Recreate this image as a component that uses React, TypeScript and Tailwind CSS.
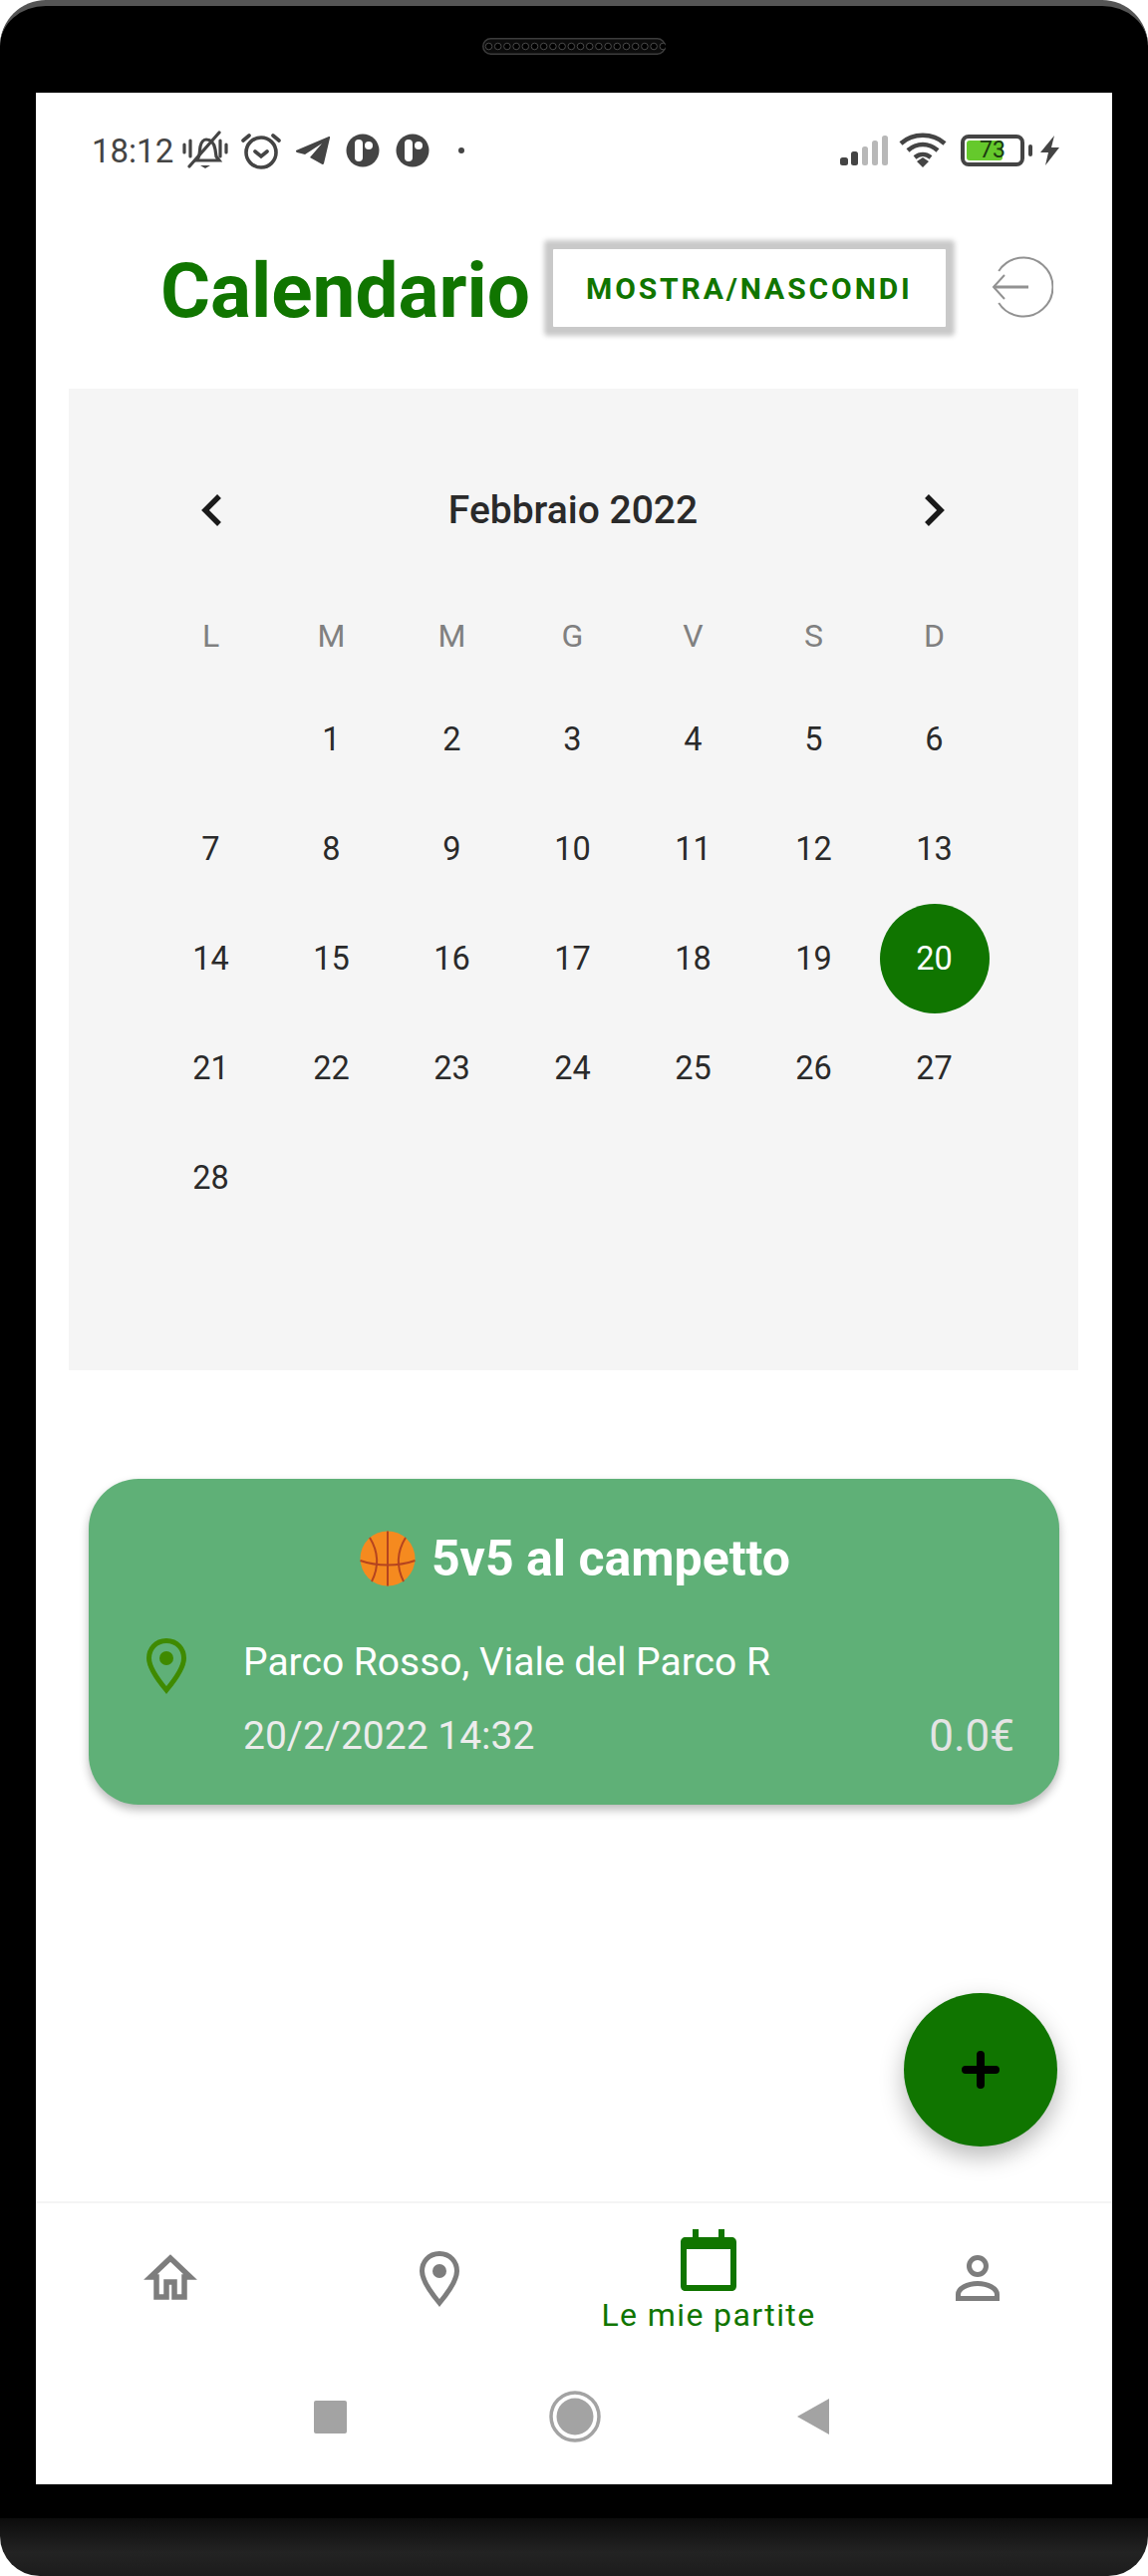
import React from "react";

function Dot() {
  return <svg width="8" height="8" viewBox="0 0 8 8"><circle cx="4" cy="4" r="3" fill="#444" /></svg>;
}

function PillIcon() {
  return (
    <svg width="34" height="34" viewBox="0 0 34 34">
      <circle cx="17" cy="17" r="16.5" fill="#444" />
      <rect x="9" y="6" width="8" height="22" rx="4" fill="#fff" />
      <circle cx="23" cy="12" r="4" fill="#fff" />
    </svg>
  );
}

function StatusBar() {
  return (
    <div className="flex h-[114px] items-center justify-between pl-[56px] pr-[52px] pt-[2px]">
      <div className="flex items-center">
        <span className="text-[33px] leading-none text-[#444]">18:12</span>
        <svg width="46" height="40" viewBox="0 0 46 40" className="ml-[9px]">
          <g fill="none" stroke="#444" strokeWidth="3.2" strokeLinecap="round">
            <path d="M2 14v8M8 10v16M38 10v16M44 14v8" />
            <path d="M14 30c4-3 3-8 4-14 1-5 4-7 6-7 6 0 8 4 9 10l1 7 3 4z" />
            <path d="M7 36L37 2" />
          </g>
          <path d="M18 35h10l-5 3z" fill="#444" />
        </svg>
        <svg width="42" height="38" viewBox="0 0 42 38" className="ml-[12px]">
          <g fill="none" stroke="#444" strokeWidth="3.6" strokeLinecap="round">
            <circle cx="21" cy="21" r="15" />
            <path d="M15 20l6 5 6-5" />
            <path d="M3 9l6-5M39 9l-6-5" />
          </g>
        </svg>
        <svg width="34" height="30" viewBox="0 0 34 30" className="ml-[14px]">
          <path d="M0 15L33 1c1-.3 1.400.4 1 1.400L28 28c-.3 1-1 1.300-2 .8L14 22 26 8 9 19l-8-2c-1-.4-1.300-1.500-1-2z" fill="#444" />
        </svg>
        <div className="ml-[16px] flex"><PillIcon /></div>
        <div className="ml-[16px] flex"><PillIcon /></div>
        <div className="ml-[28px] flex"><Dot /></div>
      </div>
      <div className="flex items-center">
        <svg width="48" height="32" viewBox="0 0 48 32">
          <rect x="0" y="23" width="8" height="8" rx="2.500" fill="#444" />
          <rect x="11" y="17" width="7" height="14" rx="2.500" fill="#444" />
          <rect x="22" y="12" width="6" height="19" rx="2.500" fill="#b8b8b8" />
          <rect x="32" y="6" width="6" height="25" rx="2.500" fill="#b8b8b8" />
          <rect x="42" y="1" width="6" height="30" rx="2.500" fill="#b8b8b8" />
        </svg>
        <svg width="48" height="36" viewBox="0 0 48 36" className="ml-[11px]">
          <g fill="none" stroke="#444" strokeWidth="4.500">
            <path d="M2 11C14 0 34 0 46 11" />
            <path d="M9 18C18 10 30 10 39 18" />
            <path d="M16 25C21 21 27 21 32 25" />
          </g>
          <path d="M18 29l6-4 6 4-6 6z" fill="#444" />
        </svg>
        <div className="relative ml-[14px] flex h-[32px] w-[64px] items-center rounded-[8px] border-[4px] border-[#444] p-[2px]">
          <div className="h-full w-[36px] rounded-[3px] bg-[#65c92c]" />
          <span className="absolute left-[15px] top-[-2px] text-[23px] leading-[28px] text-[#1c3a10]">73</span>
        </div>
        <div className="ml-[4px] h-[12px] w-[4px] rounded-full bg-[#444]" />
        <svg width="20" height="30" viewBox="0 0 20 30" className="ml-[8px]">
          <path d="M14 0L0 17h8L5 30 19 12h-8z" fill="#444" />
        </svg>
      </div>
    </div>
  );
}

function Header() {
  return (
    <div className="mt-[37px] flex h-[116px] items-start pl-[125px]">
      <h1 className="mt-[6px] text-[76.5px] font-bold leading-[84px] text-[#107500]">Calendario</h1>
      <button className="ml-[23px] mt-[6px] flex h-[78px] w-[394px] shrink-0 items-center justify-center rounded-[1px] bg-white text-[30px] font-bold tracking-[2.9px] text-[#107500] shadow-[0_0_5px_9px_#c9c9c9]">
        MOSTRA/NASCONDI
      </button>
      <svg width="64" height="64" viewBox="0 0 64 64" className="ml-[44px] mt-[12px] shrink-0" fill="none" stroke="#929292">
        <path d="M9.200 16A29.500 29.500 0 1 1 9.200 48" strokeWidth="2" />
        <path d="M4 32h35" strokeWidth="3" />
        <path d="M15 20L4 32l11 12" strokeWidth="2" />
      </svg>
    </div>
  );
}

const days: (number | null)[] = [null, ...Array.from({ length: 28 }, (_, i) => i + 1)];

function Chevron({ dir }: { dir: "left" | "right" }) {
  return (
    <svg width="24" height="34" viewBox="0 0 24 34" fill="none" stroke="#1a1a1a" strokeWidth="5.500">
      <path d={dir === "left" ? "M19 3L5 17l14 14" : "M5 3l14 14L5 31"} />
    </svg>
  );
}

function Calendar() {
  return (
    <section className="ml-[33px] mr-[34px] mt-[30px] h-[985px] bg-[#f5f5f5] pl-[82px] pr-[84px] pt-[92px]">
      <div className="flex h-[60px] items-center justify-between pl-[50px] pr-[49px]">
        <Chevron dir="left" />
        <span className="text-[39px] font-medium leading-none text-[#2a2a2a]">Febbraio 2022</span>
        <Chevron dir="right" />
      </div>
      <div className="mt-[76px] grid grid-cols-7 text-center text-[32px] text-[#808080]">
        {["L", "M", "M", "G", "V", "S", "D"].map((d, i) => (
          <div key={i} className="h-[40px] leading-[40px]">{d}</div>
        ))}
      </div>
      <div className="mt-[29px] grid grid-cols-7 auto-rows-[110px] text-center text-[32.500px] text-[#2a2a2a]">
        {days.map((d, i) => (
          <div key={i} className="flex items-center justify-center">
            {d === 20 ? (
              <span className="flex h-[110px] w-[110px] items-center justify-center rounded-full bg-[#107500] text-white">{d}</span>
            ) : (
              d
            )}
          </div>
        ))}
      </div>
    </section>
  );
}

function Basketball() {
  return (
    <svg width="56" height="56" viewBox="0 0 56 56">
      <circle cx="28" cy="28" r="27.500" fill="#f58a1f" />
      <g fill="none" stroke="#b5441f" strokeWidth="2">
        <path d="M28 .5v55M.5 30c17 6 38 6 55 0" />
        <path d="M10 7c8 13 10 28 2 44M46 7c-8 13-10 28-2 44" />
      </g>
    </svg>
  );
}

function EventCard() {
  return (
    <article className="mx-[53px] mt-[109px] h-[327px] rounded-[50px] bg-[#5fb077] pt-[52px] shadow-[0_5px_10px_rgba(0,0,0,0.28)]">
      <div className="flex items-center justify-center pl-[2px]">
        <Basketball />
        <h2 className="ml-[16px] text-[50px] font-bold leading-[56px] text-white">5v5 al campetto</h2>
      </div>
      <div className="mt-[48px] flex items-start pl-[58px] pr-[45px]">
        <svg width="40" height="56" viewBox="0 0 40 56" className="mt-[4px] shrink-0">
          <path d="M20 2.500C9 2.500 2.500 11 2.500 20c0 9 10 23 17.500 32C27.500 43 37.500 29 37.500 20 37.500 11 31 2.500 20 2.500z" fill="none" stroke="#3f8a00" strokeWidth="5" />
          <circle cx="20" cy="20" r="7" fill="#3f8a00" />
        </svg>
        <div className="ml-[57px] flex-1 pt-[5px]">
          <p className="text-[39px] leading-[46px] text-white">Parco Rosso, Viale del Parco R</p>
          <div className="mt-[28px] flex items-center justify-between">
            <span className="text-[39px] leading-[46px] text-[#ececec]">20/2/2022 14:32</span>
            <span className="text-[44px] leading-[46px] text-[#e4e4e4]">0.0€</span>
          </div>
        </div>
      </div>
    </article>
  );
}

function BottomNav() {
  return (
    <nav className="grid h-[179px] grid-cols-4 border-t-[2px] border-[#f4f4f4] bg-white">
      <div className="flex justify-center pt-[49px]">
        <svg width="54" height="48" viewBox="0 0 54 48" fill="none" stroke="#7d7d7d" strokeWidth="5.500">
          <path d="M27 6L7 25h6v20h10V30h8v15h10V25h6z" />
        </svg>
      </div>
      <div className="flex justify-center pt-[48px]">
        <svg width="40" height="56" viewBox="0 0 40 56">
          <path d="M20 2.500C9 2.500 2.500 11 2.500 20c0 9 10 23 17.500 32C27.500 43 37.500 29 37.500 20 37.500 11 31 2.500 20 2.500z" fill="none" stroke="#7d7d7d" strokeWidth="5" />
          <circle cx="20" cy="20" r="7" fill="#7d7d7d" />
        </svg>
      </div>
      <div className="flex flex-col items-center pt-[26px]">
        <svg width="56" height="62" viewBox="0 0 56 62">
          <path d="M12 0h6v8h20V0h6v8h7c3 0 5 2 5 5v44c0 3-2 5-5 5H5c-3 0-5-2-5-5V13c0-3 2-5 5-5h7z" fill="#107500" />
          <rect x="6" y="20" width="44" height="36" fill="#fff" />
        </svg>
        <span className="mt-[6px] whitespace-nowrap text-[32px] leading-[36px] tracking-[1.4px] text-[#107500]">Le mie partite</span>
      </div>
      <div className="flex justify-center pt-[52px]">
        <svg width="44" height="46" viewBox="0 0 44 46" fill="none" stroke="#7d7d7d" strokeWidth="5">
          <circle cx="22" cy="11" r="8.500" />
          <path d="M2.500 43.500v-4c0-6 9-11 19.500-11s19.500 5 19.500 11v4z" />
        </svg>
      </div>
    </nav>
  );
}

function AndroidNav() {
  return (
    <div className="flex h-[105px] items-start pl-[279px] pt-[10px]">
      <div className="mt-[11px] h-[33px] w-[33px] rounded-[2px] bg-[#a3a3a3]" />
      <svg width="52" height="52" viewBox="0 0 52 52" className="ml-[203px] mt-[1px]">
        <circle cx="26" cy="26" r="24" fill="none" stroke="#a3a3a3" strokeWidth="3.500" />
        <circle cx="26" cy="26" r="18.500" fill="#a3a3a3" />
      </svg>
      <svg width="34" height="38" viewBox="0 0 34 38" className="ml-[196px] mt-[8px]">
        <path d="M33 1v36L1 19z" fill="#a3a3a3" />
      </svg>
    </div>
  );
}

function Speaker() {
  return (
    <svg width="184" height="17" viewBox="0 0 184 17" className="mx-auto mt-[32px] block">
      <rect x="0.750" y="0.750" width="182.500" height="15.500" rx="7.750" fill="#0c0c0c" stroke="#3c3c3c" strokeWidth="1.500" />
      {Array.from({ length: 20 }, (_, i) => (
        <circle key={i} cx={6.5 + i * 9.2} cy="8.500" r="3.300" fill="#000" stroke="#4a4a4a" strokeWidth="1" />
      ))}
    </svg>
  );
}

export default function App() {
  return (
    <div
      className="flex h-[2585px] w-[1152px] flex-col overflow-hidden bg-white"
      style={{ fontFamily: "Roboto, 'Liberation Sans', sans-serif" }}
    >
      <div className="h-[93px] shrink-0 overflow-hidden rounded-t-[46px] border-t-[6px] border-[#555] bg-black">
        <Speaker />
      </div>
      <div className="flex flex-1 flex-col bg-black px-[36px]">
        <div className="relative flex flex-1 flex-col bg-white">
          <StatusBar />
          <Header />
          <Calendar />
          <EventCard />
          <div className="flex-1" />
          <button className="absolute left-[871px] top-[1907px] flex h-[154px] w-[154px] items-center justify-center rounded-full bg-[#107500] shadow-[0_10px_24px_rgba(0,0,0,0.28)]">
            <svg width="38" height="38" viewBox="0 0 38 38">
              <path d="M19 4v30M4 19h30" stroke="#000" strokeWidth="8" strokeLinecap="round" />
            </svg>
          </button>
          <BottomNav />
          <AndroidNav />
        </div>
      </div>
      <div className="h-[34px] shrink-0 bg-black" />
      <div className="h-[58px] shrink-0 rounded-b-[40px] bg-[linear-gradient(180deg,#0c0c0c,#232323_60%,#1c1c1c)]" />
    </div>
  );
}
